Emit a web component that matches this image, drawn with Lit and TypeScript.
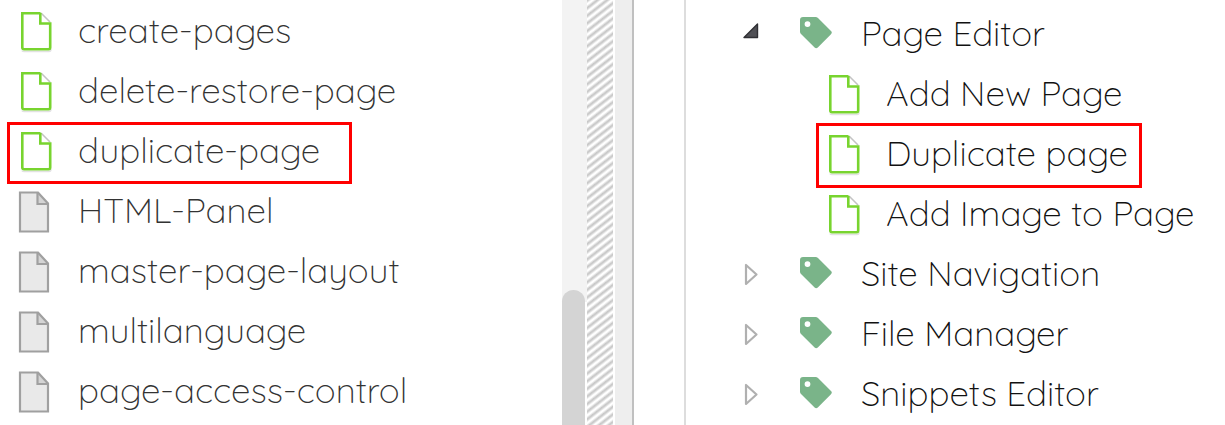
import { LitElement, html, css, svg } from "lit";
import { customElement } from "lit/decorators.js";

const pageIcon = (muted: boolean) => html`
  <svg class="icon" viewBox=${muted ? "-1 -1 36 44" : "0 -1 36 44"} width="36" height="44" aria-hidden="true">
    ${muted
      ? svg`<path d="M2 2.500H19.500L30 13.500V41.500H2Z" fill="#e9e9e9"/>
          <path d="M20 3L30 13.500H20Z" fill="#d4d4d4"/>
          <path d="M2 2.500H20L30 13.500V41.500H2Z" fill="none" stroke="#a0a0a0" stroke-width="2.200"/>
          <path d="M19.500 3V14H30" fill="none" stroke="#a0a0a0" stroke-width="2.200"/>`
      : svg`<path d="M5 40.500Q5 41.500 7 41.500H32Q34 41.500 34 39" fill="none" stroke="#e2e2e2" stroke-width="1.500"/>
          <path d="M24 3L33 12" stroke="#c4c4c4" stroke-width="1.600"/>
          <path d="M23.300 3V13.500H33.200V37.500Q33.200 39.200 31.500 39.200H7Q5.300 39.200 5.300 37.500V3.300H22.500L24 4.500" fill="none" stroke="#78d42f" stroke-width="2.600"/>`}
  </svg>`;

const tagIcon = html`
  <svg class="tag" viewBox="0 0 32 34" width="32" height="34" aria-hidden="true">
    <path fill="#7ab489" fill-rule="evenodd" d="M3 0H15.500Q17 0 18 1L31 14Q32.600 15.600 31 17.200L17.800 30.400Q16.200 32 14.600 30.400L1 17Q0 16 0 14.500V3Q0 0 3 0ZM7.500 4.200A2.900 2.900 0 1 0 7.500 10A2.900 2.900 0 1 0 7.500 4.200Z"/>
  </svg>`;

const arrowIcon = (open: boolean) => html`
  <svg class="arrow" viewBox="0 0 20 24" width="20" height="24" aria-hidden="true">
    ${open
      ? svg`<path d="M16.500 2V15.500H3Z" fill="#505055" stroke="#303034" stroke-width="1.400" stroke-linejoin="round"/>`
      : svg`<path d="M5 3V22L15.500 12.500Z" fill="#fff" stroke="#b0b0b0" stroke-width="2.200" stroke-linejoin="round"/>`}
  </svg>`;

const pages = [
  { name: "create-pages", muted: false },
  { name: "delete-restore-page", muted: false },
  { name: "duplicate-page", muted: false, marked: true },
  { name: "HTML-Panel", muted: true },
  { name: "master-page-layout", muted: true },
  { name: "multilanguage", muted: true },
  { name: "page-access-control", muted: true },
];

const topics = [
  { name: "Page Editor", kind: "open" },
  { name: "Add New Page", kind: "page" },
  { name: "Duplicate page", kind: "page", marked: true },
  { name: "Add Image to Page", kind: "page" },
  { name: "Site Navigation", kind: "closed" },
  { name: "File Manager", kind: "closed" },
  { name: "Snippets Editor", kind: "closed" },
];

@customElement("app-root")
export class AppRoot extends LitElement {
  static styles = css`
    :host {
      display: flex;
      height: 100vh;
      overflow: hidden;
      background: #fff;
      font: 300 35px/40px Quicksand, Inter, Lato, sans-serif;
      font-feature-settings: "cv11";
    }
    ul { list-style: none; margin: 0; padding: 0; }
    svg { display: block; flex: none; }
    .files { flex: 555; min-width: 0; padding: 2px 0 0 7px; color: #333; }
    .row {
      display: flex;
      align-items: center;
      gap: 25px;
      box-sizing: border-box;
      width: fit-content;
      border: 3px solid transparent;
      white-space: nowrap;
    }
    .files .row { height: 62px; margin-bottom: -2px; padding: 0 29px 4px 7px; }
    .row.marked { border-color: #f00; }
    .scroll { width: 25px; flex: none; background: #f3f3f3; display: flex; flex-direction: column; }
    .space { flex: 58; }
    .rail { flex: 27; background: linear-gradient(#f3f3f3 12px, #fff 12px); }
    .thumb { width: 23px; height: 100%; border-radius: 12px 12px 0 0; background: #d4d4d4; }
    .grip {
      width: 26px;
      flex: none;
      background: repeating-linear-gradient(142deg, #c8c8c8 0, #cecece 1px, #fff 3px, #fff 4px, #cecece 6px);
    }
    .gutter { width: 17px; flex: none; margin-left: 2px; background: #eee; border-right: 2px solid #c0c0c0; }
    .topics { flex: 539; min-width: 0; margin-left: 50px; padding-top: 3px; border-left: 2px solid #ddd; color: #111; }
    .topics .row { height: 65px; margin-bottom: -5px; padding-bottom: 4px; }
    .topics .node { margin-left: 52px; gap: 0; }
    .node .tag { margin: 0 29px 0 39px; }
    .topics .leaf { margin-left: 130px; padding-left: 6px; padding-right: 11px; }
    a { display: block; padding-bottom: 2px; color: inherit; text-decoration: none; }
    button { border: 0; padding: 0; background: none; font: inherit; color: inherit; }
  `;

  render() {
    return html`
      <ul class="files">
        ${pages.map((p) => html`<li class="row ${p.marked ? "marked" : ""}">${pageIcon(p.muted)}<a href="#">${p.name}</a></li>`)}
      </ul>
      <div class="scroll"><div class="space"></div><div class="rail"><div class="thumb"></div></div></div>
      <div class="grip"></div>
      <div class="gutter"></div>
      <ul class="topics">
        ${topics.map((t) =>
          t.kind === "page"
            ? html`<li class="row leaf ${t.marked ? "marked" : ""}">${pageIcon(false)}<a href="#">${t.name}</a></li>`
            : html`<li class="row node"><button aria-label="Toggle ${t.name}" aria-expanded=${t.kind === "open"}>${arrowIcon(t.kind === "open")}</button>${tagIcon}<a href="#">${t.name}</a></li>`
        )}
      </ul>
    `;
  }
}
